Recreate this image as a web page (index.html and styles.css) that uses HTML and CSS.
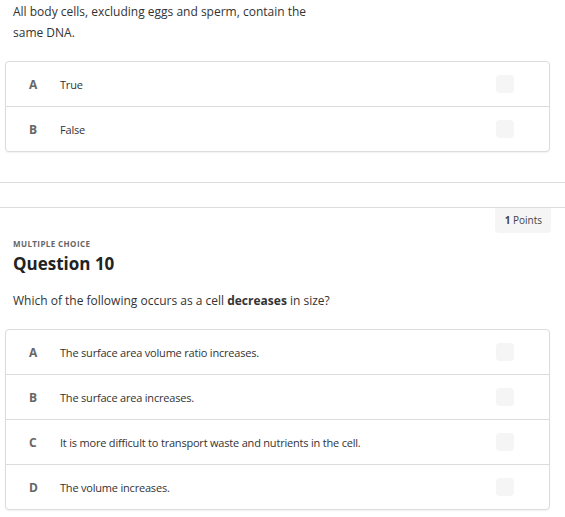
FILE: index.html
```html
<!DOCTYPE html>
<html>
<head>
<meta charset="utf-8">
<link rel="stylesheet" href="styles.css">
</head>
<body>
<section class="question first">
  <p class="prompt">All body cells, excluding eggs and sperm, contain the<br>same DNA.</p>
  <div class="options">
    <div class="option"><span class="letter">A</span><span class="text">True</span><span class="box"></span></div>
    <div class="option"><span class="letter">B</span><span class="text">False</span><span class="box"></span></div>
  </div>
</section>
<div class="gap"></div>
<section class="question second">
  <div class="points-row"><span class="points"><b>1</b> Points</span></div>
  <div class="type">MULTIPLE CHOICE</div>
  <h2 class="title">Question 10</h2>
  <p class="prompt">Which of the following occurs as a cell <strong>decreases</strong> in size?</p>
  <div class="options">
    <div class="option"><span class="letter">A</span><span class="text">The surface area volume ratio increases.</span><span class="box"></span></div>
    <div class="option"><span class="letter">B</span><span class="text">The surface area increases.</span><span class="box"></span></div>
    <div class="option"><span class="letter">C</span><span class="text">It is more difficult to transport waste and nutrients in the cell.</span><span class="box"></span></div>
    <div class="option"><span class="letter">D</span><span class="text">The volume increases.</span><span class="box"></span></div>
  </div>
</section>
</body>
</html>
```
FILE: styles.css
```css
html, body {
  margin: 0;
  padding: 0;
  background: #fff;
}
body {
  font-family: "Open Sans", "Liberation Sans", sans-serif;
  color: #333;
  width: 565px;
}
.question {
  padding: 0 15px 0 5px;
}
.first {
  padding-top: 1px;
  padding-bottom: 30px;
  border-bottom: 1px solid #dcdcdc;
}
.gap {
  height: 24px;
}
.second {
  border-top: 1px solid #dcdcdc;
}
.prompt {
  margin: 0;
  padding-left: 8px;
  font-size: 12px;
  line-height: 21px;
  color: #333;
}
.first .prompt {
  margin-bottom: 18px;
}
.options {
  border: 1px solid #dcdcdc;
  border-radius: 4px;
  background: #fff;
  box-shadow: 0 1px 2px rgba(0,0,0,0.06);
}
.option {
  display: flex;
  align-items: center;
  height: 44px;
  border-top: 1px solid #dcdcdc;
  padding-left: 23px;
  padding-right: 35px;
}
.option:first-child {
  border-top: none;
}
.letter {
  width: 31px;
  font-size: 12px;
  font-weight: 700;
  color: #666;
}
.text {
  flex: 1;
  font-size: 11px;
  color: #333;
  letter-spacing: -0.2px;
}
.box {
  width: 18px;
  height: 18px;
  border-radius: 4px;
  background: #f5f5f5;
}
.points-row {
  display: flex;
  justify-content: flex-end;
}
.points {
  background: #f5f5f5;
  border-radius: 0 0 4px 4px;
  font-size: 10px;
  color: #444;
  padding: 0 9px 0 10px;
  height: 25px;
  line-height: 25px;
  margin-right: -1px;
}
.points b {
  font-weight: 700;
}
.type {
  padding-left: 8px;
  margin-top: 5px;
  font-size: 8px;
  font-weight: 700;
  letter-spacing: 0.4px;
  color: #666;
}
.title {
  margin: 3px 0 14px;
  padding-left: 8px;
  font-size: 17px;
  font-weight: 700;
  color: #222;
  line-height: 24px;
}
.second .prompt {
  margin-bottom: 18px;
}
.second .options {
  margin-bottom: 7px;
}
```
